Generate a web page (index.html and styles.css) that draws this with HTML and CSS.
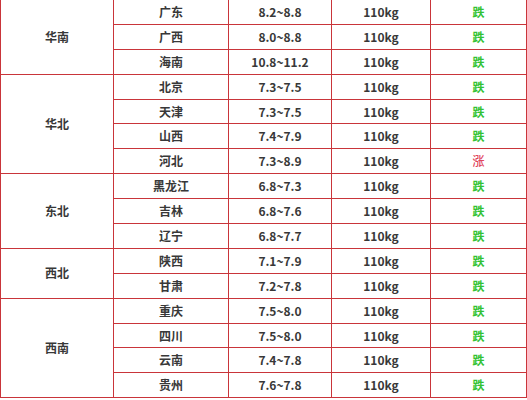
FILE: index.html
```html
<!DOCTYPE html>
<html lang="zh">
<head>
<meta charset="utf-8">
<link rel="stylesheet" href="styles.css">
</head>
<body>
<table class="price-table">
  <colgroup>
    <col class="c-region"><col class="c-prov"><col class="c-price"><col class="c-weight"><col class="c-trend">
  </colgroup>
  <tbody>
    <tr><td class="region" rowspan="3">华南</td><td>广东</td><td>8.2~8.8</td><td>110kg</td><td class="down">跌</td></tr>
    <tr><td>广西</td><td>8.0~8.8</td><td>110kg</td><td class="down">跌</td></tr>
    <tr><td>海南</td><td>10.8~11.2</td><td>110kg</td><td class="down">跌</td></tr>
    <tr><td class="region" rowspan="4">华北</td><td>北京</td><td>7.3~7.5</td><td>110kg</td><td class="down">跌</td></tr>
    <tr><td>天津</td><td>7.3~7.5</td><td>110kg</td><td class="down">跌</td></tr>
    <tr><td>山西</td><td>7.4~7.9</td><td>110kg</td><td class="down">跌</td></tr>
    <tr><td>河北</td><td>7.3~8.9</td><td>110kg</td><td class="up">涨</td></tr>
    <tr><td class="region" rowspan="3">东北</td><td>黑龙江</td><td>6.8~7.3</td><td>110kg</td><td class="down">跌</td></tr>
    <tr><td>吉林</td><td>6.8~7.6</td><td>110kg</td><td class="down">跌</td></tr>
    <tr><td>辽宁</td><td>6.8~7.7</td><td>110kg</td><td class="down">跌</td></tr>
    <tr><td class="region" rowspan="2">西北</td><td>陕西</td><td>7.1~7.9</td><td>110kg</td><td class="down">跌</td></tr>
    <tr><td>甘肃</td><td>7.2~7.8</td><td>110kg</td><td class="down">跌</td></tr>
    <tr><td class="region" rowspan="4">西南</td><td>重庆</td><td>7.5~8.0</td><td>110kg</td><td class="down">跌</td></tr>
    <tr><td>四川</td><td>7.5~8.0</td><td>110kg</td><td class="down">跌</td></tr>
    <tr><td>云南</td><td>7.4~7.8</td><td>110kg</td><td class="down">跌</td></tr>
    <tr><td>贵州</td><td>7.6~7.8</td><td>110kg</td><td class="down">跌</td></tr>
  </tbody>
</table>
</body>
</html>
```

FILE: styles.css
```css
html, body {
  margin: 0;
  padding: 0;
  background: #ffffff;
}

body {
  font-family: "Noto Sans CJK SC", "Noto Sans", sans-serif;
  color: #383838;
  overflow: hidden;
}

.price-table {
  border-collapse: collapse;
  table-layout: fixed;
  width: 526px;
  margin-top: -1px;
}

.c-region { width: 113px; }
.c-prov { width: 115px; }
.c-price { width: 103px; }
.c-weight { width: 99px; }
.c-trend { width: 96px; }

.price-table tr {
  height: 24.9px;
}

.price-table td {
  border: 1px solid #c9353a;
  padding: 0;
  text-align: center;
  vertical-align: middle;
  font-size: 12px;
  font-weight: 700;
  line-height: 16px;
}

.price-table .down {
  color: #33c233;
}

.price-table .up {
  color: #e0455c;
  font-weight: 500;
}
```
